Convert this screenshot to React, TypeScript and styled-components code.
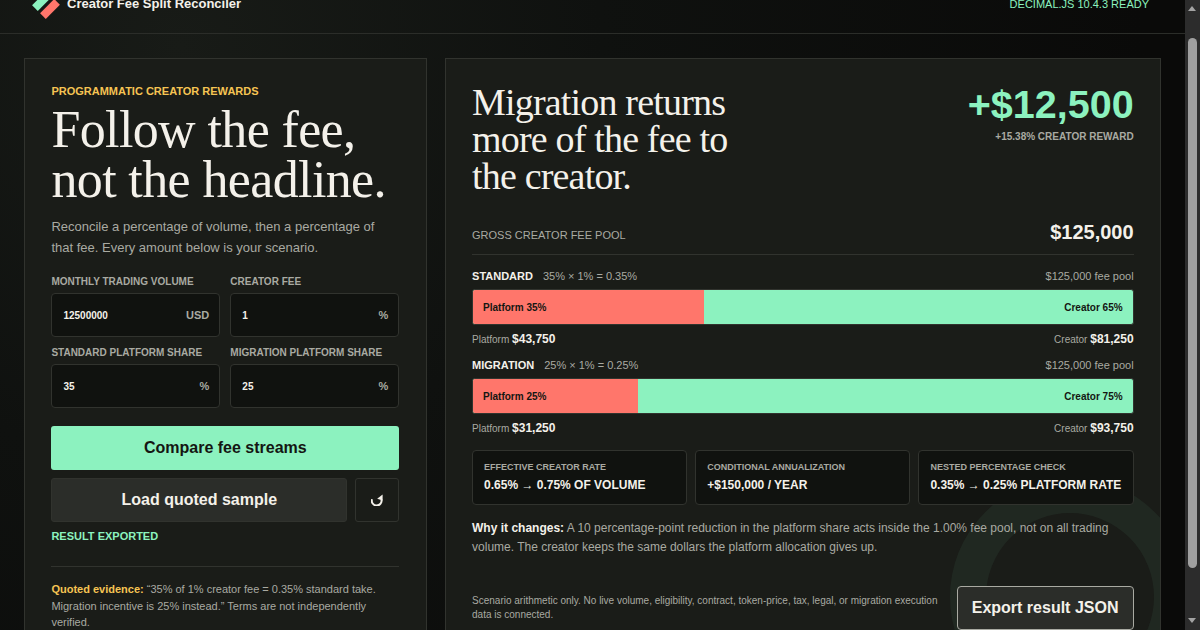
import React, { useLayoutEffect } from "react";
import styled, { createGlobalStyle } from "styled-components";

const Global = createGlobalStyle`
  html { color-scheme: dark; background: #0b0c0b; }
  body { margin: 0; font-family: "Liberation Sans", Arial, sans-serif; color: #f4f1ea; background: radial-gradient(circle at 15% 10%, #181b17 0%, #0f110f 35%, #0a0a09 80%); }
  * { box-sizing: border-box; }
`;
const Page = styled.div`min-height: 714px; padding-right: 15px;`;
const Scrollbar = styled.div`
  position: fixed; top: 0; right: 0; bottom: 0; width: 15px; background: #2c2c2c;
`;
const Arrow = styled.span<{ $down?: boolean }>`
  position: absolute; left: 3px; ${p => (p.$down ? "bottom: 7px;" : "top: 6px;")} width: 0; height: 0;
  border-left: 4.5px solid transparent; border-right: 4.5px solid transparent;
  ${p => (p.$down ? "border-top: 5px solid #a3a3a3;" : "border-bottom: 5px solid #a3a3a3;")}
`;
const Thumb = styled.span`
  position: absolute; left: 3px; top: 38px; width: 9px; height: 530px; border-radius: 5px; background: #9f9f9f;
`;
const Header = styled.header`
  height: 60px; display: flex; align-items: center; justify-content: space-between;
  padding: 0 36px; border-bottom: 1px solid #2b2d29;
`;
const Brand = styled.div`display: flex; align-items: center; gap: 11px; font-size: 13px; font-weight: 700; color: #f4f1ea;`;
const Mark = styled.span`position: relative; width: 20px; height: 20px; display: block;`;
const Stripe = styled.i<{ $c: string; $x: number; $y: number }>`
  position: absolute; left: ${p => p.$x}px; top: ${p => p.$y}px; width: 20px; height: 8px;
  background: ${p => p.$c}; transform: rotate(-45deg);
`;
const Ready = styled.div`font-size: 11px; color: #8cf2bf;`;
const Main = styled.main`
  display: grid; grid-template-columns: 402.67px 1fr; gap: 18px; padding: 24px 24px 24px;
`;
const Panel = styled.section`
  position: relative; overflow: hidden; background: #1a1c18; border: 1px solid #31332e; padding: 26px 26.4px;
`;
const Eyebrow = styled.div`font-size: 11px; font-weight: 700; color: #f6c453; line-height: 13px;`;
const H1 = styled.h1`
  margin: 6.5px 0 0; font: 400 52px/50px "Liberation Serif", "Times New Roman", serif; letter-spacing: -0.62px; color: #f4f1ea;
`;
const Lead = styled.p`margin: 11.5px 0 0; max-width: 335px; font-size: 13px; line-height: 21px; color: #a9aaa2;`;
const Fields = styled.div`display: grid; grid-template-columns: 1fr 1fr; gap: 10px; margin-top: 18px;`;
const Field = styled.label`display: block;`;
const FieldLabel = styled.div`font-size: 10px; font-weight: 700; color: #a9aaa2; line-height: 12px; margin-bottom: 5px;`;
const InputBox = styled.div`
  height: 44px; display: flex; align-items: center; justify-content: space-between;
  padding: 0 10px 0 11px; background: #10120f; border: 1px solid #31332e; border-radius: 4px;
`;
const Val = styled.span`font-size: 10px; font-weight: 700; color: #f4f1ea;`;
const Unit = styled.span`font-size: 11px; font-weight: 700; color: #a9aaa2;`;
const Primary = styled.button`
  display: block; width: 100%; height: 44px; margin-top: 18px; border: 0; border-radius: 3px;
  background: #8cf2bf; color: #141612; font: 700 16px "Liberation Sans", sans-serif;
`;
const BtnRow = styled.div`display: grid; grid-template-columns: 1fr 44px; gap: 8px; margin-top: 8px;`;
const Secondary = styled.button`
  height: 44px; border: 1px solid #31332e; border-radius: 3px; background: #2b2d29; color: #f4f1ea;
  font: 700 16px "Liberation Sans", sans-serif;
`;
const IconBtn = styled.button`
  display: flex; align-items: center; justify-content: center;
  height: 44px; border: 1px solid #31332e; border-radius: 3px; background: transparent; color: #f4f1ea; padding: 0;
`;
const Status = styled.div`margin-top: 8px; font-size: 11px; font-weight: 700; color: #8cf2bf; line-height: 13px;`;
const Evidence = styled.p`
  margin: 23px 0 0; padding-top: 14px; border-top: 1px solid #31332e; font-size: 11px; line-height: 16.5px; color: #a9aaa2;
`;
const Gold = styled.strong`color: #f6c453;`;
const Ring = styled.div`
  position: absolute; right: -30px; top: 418px; width: 240px; height: 240px; border-radius: 50%;
  border: 36px solid rgba(140, 242, 191, 0.06); pointer-events: none;
`;
const Top = styled.div`display: flex; justify-content: space-between; align-items: flex-start; margin-top: -1px;`;
const H2 = styled.h2`
  margin: 0; width: 280px; font: 400 38px/37px "Liberation Serif", "Times New Roman", serif; letter-spacing: -0.82px; color: #f4f1ea;
`;
const Gain = styled.div`text-align: right;`;
const Big = styled.div`font-size: 39.5px; font-weight: 700; line-height: 40px; color: #8cf2bf;`;
const GainSub = styled.div`margin-top: 7px; font-size: 10px; font-weight: 700; color: #a9aaa2; line-height: 12px;`;
const Pool = styled.div`
  display: flex; justify-content: space-between; align-items: baseline; margin-top: 26px; padding-bottom: 10px;
  border-bottom: 1px solid #31332e;
`;
const PoolLabel = styled.span`font-size: 11px; color: #a9aaa2;`;
const PoolVal = styled.span`font-size: 20px; font-weight: 700; color: #f4f1ea;`;
const Stream = styled.div`margin-top: 14px; & + & { margin-top: 10px; }`;
const StreamHead = styled.div`display: flex; justify-content: space-between; font-size: 11px; line-height: 14px; color: #a9aaa2;`;
const StreamTitle = styled.strong`color: #f4f1ea; margin-right: 10px;`;
const Bar = styled.div`
  display: flex; height: 36px; margin-top: 6px; border: 1px solid #31332e; border-radius: 3px; overflow: hidden;
  background: #8cf2bf; font-size: 10px; font-weight: 700; color: #141612;
`;
const BarPlatform = styled.div`
  background: #ff766b; display: flex; align-items: center; padding-left: 10px;
`;
const BarCreator = styled.div`flex: 1; display: flex; align-items: center; justify-content: flex-end; padding-right: 10px;`;
const Amounts = styled.div`display: flex; justify-content: space-between; align-items: baseline; margin-top: 6px; font-size: 10px; line-height: 16px; color: #a9aaa2;`;
const Amount = styled.strong`font-size: 12px; color: #f4f1ea;`;
const Cards = styled.div`position: relative; display: grid; grid-template-columns: repeat(3, 1fr); gap: 8px; margin-top: 13px;`;
const Card = styled.div`height: 55px; padding: 11px 11px 0; background: #10120f; border: 1px solid #31332e; border-radius: 4px;`;
const CardLabel = styled.div`font-size: 9px; font-weight: 700; line-height: 11px; color: #a9aaa2;`;
const CardVal = styled.div`margin-top: 5px; font-size: 12px; font-weight: 700; line-height: 14px; color: #f4f1ea; white-space: nowrap;`;
const Why = styled.p`position: relative; margin: 14px 0 0; font-size: 12px; line-height: 19px; color: #a9aaa2;`;
const WhyLead = styled.strong`color: #f4f1ea;`;
const Foot = styled.div`position: relative; display: flex; justify-content: space-between; align-items: center; margin-top: 29px; gap: 18px;`;
const FootNote = styled.p`margin: 0; font-size: 10px; line-height: 14px; color: #a9aaa2;`;
const Export = styled.button`
  flex: none; height: 44px; width: 177px; border: 1px solid #a9aaa2; border-radius: 4px; background: #2b2d29; color: #f4f1ea;
  font: 700 16px "Liberation Sans", sans-serif; padding: 0;
`;

const fields = [
  { label: "MONTHLY TRADING VOLUME", val: "12500000", unit: "USD" },
  { label: "CREATOR FEE", val: "1", unit: "%" },
  { label: "STANDARD PLATFORM SHARE", val: "35", unit: "%" },
  { label: "MIGRATION PLATFORM SHARE", val: "25", unit: "%" },
];
const streams = [
  { name: "STANDARD", calc: "35% × 1% = 0.35%", p: 35, c: 65, pa: "$43,750", ca: "$81,250" },
  { name: "MIGRATION", calc: "25% × 1% = 0.25%", p: 25, c: 75, pa: "$31,250", ca: "$93,750" },
];
const cards = [
  { label: "EFFECTIVE CREATOR RATE", val: "0.65% → 0.75% OF VOLUME" },
  { label: "CONDITIONAL ANNUALIZATION", val: "+$150,000 / YEAR" },
  { label: "NESTED PERCENTAGE CHECK", val: "0.35% → 0.25% PLATFORM RATE" },
];

export default function App() {
  useLayoutEffect(() => { window.scrollTo(0, 26); }, []);
  return (
    <Page>
      <Global />
      <Header>
        <Brand>
          <Mark>
            <Stripe $c="#8cf2bf" $x={-4} $y={3} />
            <Stripe $c="#ff766b" $x={4} $y={11} />
          </Mark>
          Creator Fee Split Reconciler
        </Brand>
        <Ready>DECIMAL.JS 10.4.3 READY</Ready>
      </Header>
      <Main>
        <Panel>
          <Eyebrow>PROGRAMMATIC CREATOR REWARDS</Eyebrow>
          <H1>Follow the fee,<br />not the headline.</H1>
          <Lead>Reconcile a percentage of volume, then a percentage of that fee. Every amount below is your scenario.</Lead>
          <Fields>
            {fields.map(f => (
              <Field key={f.label}>
                <FieldLabel>{f.label}</FieldLabel>
                <InputBox><Val>{f.val}</Val><Unit>{f.unit}</Unit></InputBox>
              </Field>
            ))}
          </Fields>
          <Primary>Compare fee streams</Primary>
          <BtnRow>
            <Secondary>Load quoted sample</Secondary>
            <IconBtn aria-label="Reset">
              <svg width="12" height="12" viewBox="0 0 12 12" fill="none">
                <path d="M1 5.2A4.9 4.9 0 1 0 10.4 5.4" stroke="currentColor" strokeWidth="2" />
                <path d="M6.2 4.8 11.6 .6V6.4Z" fill="currentColor" />
              </svg>
            </IconBtn>
          </BtnRow>
          <Status>RESULT EXPORTED</Status>
          <Evidence>
            <Gold>Quoted evidence:</Gold> “35% of 1% creator fee = 0.35% standard take. Migration incentive is 25% instead.” Terms are not independently verified.
          </Evidence>
        </Panel>
        <Panel>
          <Ring />
          <Top>
            <H2>Migration returns more of the fee to the creator.</H2>
            <Gain>
              <Big>+$12,500</Big>
              <GainSub>+15.38% CREATOR REWARD</GainSub>
            </Gain>
          </Top>
          <Pool><PoolLabel>GROSS CREATOR FEE POOL</PoolLabel><PoolVal>$125,000</PoolVal></Pool>
          {streams.map(s => (
            <Stream key={s.name}>
              <StreamHead>
                <span><StreamTitle>{s.name}</StreamTitle>{s.calc}</span>
                <span>$125,000 fee pool</span>
              </StreamHead>
              <Bar>
                <BarPlatform style={{ width: `${s.p}%` }}>Platform {s.p}%</BarPlatform>
                <BarCreator>Creator {s.c}%</BarCreator>
              </Bar>
              <Amounts>
                <span>Platform <Amount>{s.pa}</Amount></span>
                <span>Creator <Amount>{s.ca}</Amount></span>
              </Amounts>
            </Stream>
          ))}
          <Cards>
            {cards.map(c => (
              <Card key={c.label}><CardLabel>{c.label}</CardLabel><CardVal>{c.val}</CardVal></Card>
            ))}
          </Cards>
          <Why><WhyLead>Why it changes:</WhyLead> A 10 percentage-point reduction in the platform share acts inside the 1.00% fee pool, not on all trading volume. The creator keeps the same dollars the platform allocation gives up.</Why>
          <Foot>
            <FootNote>Scenario arithmetic only. No live volume, eligibility, contract, token-price, tax, legal, or migration execution data is connected.</FootNote>
            <Export>Export result JSON</Export>
          </Foot>
        </Panel>
      </Main>
      <Scrollbar>
        <Arrow />
        <Thumb />
        <Arrow $down />
      </Scrollbar>
    </Page>
  );
}
